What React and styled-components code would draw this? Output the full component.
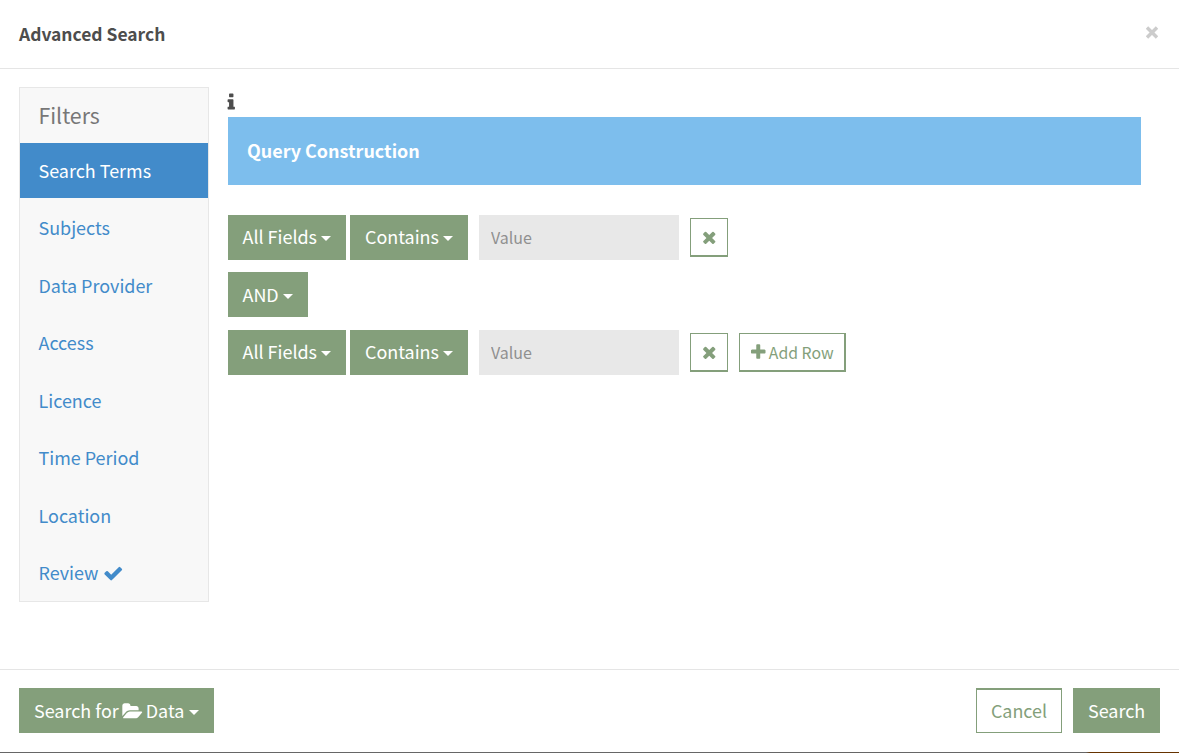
import React from 'react';
import styled, { createGlobalStyle } from 'styled-components';

const GREEN = '#849f7b';
const BLUE = '#428bca';

const GlobalStyle = createGlobalStyle`
  *, *::before, *::after { box-sizing: border-box; }
  body {
    margin: 0;
    background: #fff;
    color: #4d4d4d;
    font: 17.95px/22px "Noto Sans CJK SC", "Open Sans", sans-serif;
  }
  button, input { font: inherit; margin: 0; border-radius: 0; }
`;

const Modal = styled.div`
  height: 753px;
  display: flex;
  flex-direction: column;
  overflow: hidden;
`;

const Header = styled.header`
  flex: none;
  height: 69px;
  padding: 0 19px;
  display: flex;
  align-items: center;
  justify-content: space-between;
  border-bottom: 1px solid #e5e5e5;
`;

const Title = styled.h4`
  margin: 0;
  font-size: 17.45px;
  font-weight: 700;
`;

const Close = styled.button`
  padding: 0 2px 3px;
  display: flex;
  border: 0;
  background: none;
  color: #ccc;
`;

const Cross = styled.svg`
  width: 12px;
  height: 13px;
  fill: none;
  stroke: currentColor;
  stroke-width: 3.4;
`;

const Body = styled.main`
  flex: none;
  height: 600px;
  padding: 18px 38px 0 19px;
  display: flex;
  align-items: flex-start;
  gap: 19px;
`;

const Sidebar = styled.nav`
  flex: none;
  width: 190px;
  height: 515px;
  display: flex;
  flex-direction: column;
  background: #f8f8f8;
  border: 1px solid #e7e7e7;
`;

const Brand = styled.div`
  height: 55px;
  padding-left: 18.5px;
  color: #777;
  font-size: 21.3px;
  line-height: 53px;
`;

const Filters = styled.ul`
  margin: 0;
  padding: 0;
  list-style: none;
  display: grid;
  grid-auto-rows: 55px;
  row-gap: 2.5px;
`;

const Filter = styled.li`
  padding: 0 0 2px 18.5px;
  display: flex;
  align-items: center;
  gap: 5px;
  color: ${(p) => (p.$active ? '#fff' : BLUE)};
  background: ${(p) => (p.$active ? BLUE : 'transparent')};
`;

const Content = styled.section`
  flex: 1;
  display: flex;
  flex-direction: column;
`;

const Info = styled.div`
  height: 30px;
  padding-top: 4.5px;
  display: flex;
`;

const Banner = styled.div`
  height: 68px;
  margin-bottom: 30px;
  padding: 0 0 2px 19px;
  display: flex;
  align-items: center;
  color: #fff;
  background: #7dbeed;
  font-weight: 700;
`;

const Rows = styled.div`
  display: grid;
  grid-template-rows: 57px 58px 45px;
  align-items: start;
`;

const Row = styled.div`
  display: flex;
  align-items: center;
`;

const Solid = styled.button`
  width: ${(p) => p.$w}px;
  height: 45px;
  margin-right: ${(p) => p.$gap || 0}px;
  padding: 0 0 ${(p) => p.$lift || 2}px ${(p) => p.$inset || 14.5}px;
  display: flex;
  align-items: center;
  border: 0;
  color: #fff;
  background: ${GREEN};
  white-space: nowrap;
`;

const Caret = styled.span`
  margin: 5px 0 0 ${(p) => p.$gap || 4.5}px;
  border-top: 5px solid currentColor;
  border-left: 5px solid transparent;
  border-right: 5px solid transparent;
`;

const Value = styled.input`
  width: 200px;
  height: 45px;
  margin-right: 11px;
  padding: 0 12px 2px;
  border: 0;
  background: #e8e8e8;
  font-size: 16px;
  &::placeholder { color: #909090; opacity: 1; }
`;

const Outline = styled.button`
  width: ${(p) => p.$w}px;
  height: ${(p) => p.$h || 39}px;
  margin-right: 11px;
  padding: ${(p) => p.$pad || 0};
  display: flex;
  align-items: center;
  justify-content: center;
  gap: 1px;
  border: 1px solid ${GREEN};
  border-width: ${(p) => p.$edges || '1px 1px 2px'};
  color: ${GREEN};
  background: #fff;
  font-size: ${(p) => p.$size || 15.8}px;
  white-space: nowrap;
`;

const Footer = styled.footer`
  flex: none;
  height: 83px;
  padding: 18px 19px 0;
  display: flex;
  border-top: 1px solid #e5e5e5;
`;

const Actions = styled.div`
  margin-left: auto;
  display: flex;
`;

const BottomEdge = styled.div`
  flex: none;
  height: 1px;
  background: linear-gradient(90deg, #666 0 1086px, #663300 1090px);
`;

const Glyph = styled.svg`
  flex: none;
  width: ${(p) => p.$size}px;
  height: ${(p) => p.$size}px;
  margin: ${(p) => p.$m || 0};
  fill: currentColor;
  overflow: visible;
`;

const PATHS = {
  check: 'M1671 566q0 40-28 68l-724 724-136 136q-28 28-68 28t-68-28l-136-136-362-362q-28-28-28-68t28-68l136-136q28-28 68-28t68 28l294 295 656-657q28-28 68-28t68 28l136 136q28 28 28 68z',
  times: 'M1490 1322q0 40-28 68l-136 136q-28 28-68 28t-68-28l-294-294-294 294q-28 28-68 28t-68-28l-136-136q-28-28-28-68t28-68l294-294-294-294q-28-28-28-68t28-68l136-136q28-28 68-28t68 28l294 294 294-294q28-28 68-28t68 28l136 136q28 28 28 68t-28 68l-294 294 294 294q28 28 28 68z',
  plus: 'M1600 736v192q0 40-28 68t-68 28h-416v416q0 40-28 68t-68 28h-192q-40 0-68-28t-28-68v-416h-416q-40 0-68-28t-28-68v-192q0-40 28-68t68-28h416v-416q0-40 28-68t68-28h192q40 0 68 28t28 68v416h416q40 0 68 28t28 68z',
  info: 'M1216 1344v128q0 26-19 45t-45 19h-512q-26 0-45-19t-19-45v-128q0-26 19-45t45-19h64v-384h-64q-26 0-45-19t-19-45v-128q0-26 19-45t45-19h384q26 0 45 19t19 45v576h64q26 0 45 19t19 45zm-128-1152v192q0 26-19 45t-45 19h-256q-26 0-45-19t-19-45v-192q0-26 19-45t45-19h256q26 0 45 19t19 45z',
  folder: 'M1815 952q0 31-31 66l-336 396q-43 51-120.5 86.5t-143.5 35.5h-1088q-34 0-60.5-13t-26.5-43q0-31 31-66l336-396q43-51 120.5-86.5t143.5-35.5h1088q34 0 60.5 13t26.5 43zm-343-344v160h-832q-94 0-197 47.5t-164 119.5l-337 396-5 6q0-4-.5-12.5t-.5-12.5v-960q0-92 66-158t158-66h320q92 0 158 66t66 158v32h544q92 0 158 66t66 158z',
};

const Icon = ({ name, size, m }) => (
  <Glyph viewBox="0 0 1792 1792" $size={size} $m={m} aria-hidden="true">
    <path d={PATHS[name]} />
  </Glyph>
);

const FILTERS = ['Search Terms', 'Subjects', 'Data Provider', 'Access', 'Licence', 'Time Period', 'Location', 'Review'];

const Condition = ({ children }) => (
  <Row>
    <Solid $w={118} $gap={4} $lift={3}>All Fields<Caret $gap={4} /></Solid>
    <Solid $w={118} $gap={11} $inset={15} $lift={3}>Contains<Caret /></Solid>
    <Value placeholder="Value" />
    <Outline $w={38} aria-label="Remove row"><Icon name="times" size={18.5} m="1px 0 0 1px" /></Outline>
    {children}
  </Row>
);

export default function App() {
  return (
    <Modal>
      <GlobalStyle />
      <Header>
        <Title>Advanced Search</Title>
        <Close aria-label="Close">
          <Cross viewBox="0 0 12 13"><path d="M1 1.5 11 11.5M11 1.5 1 11.5" /></Cross>
        </Close>
      </Header>
      <Body>
        <Sidebar>
          <Brand>Filters</Brand>
          <Filters>
            {FILTERS.map((label, i) => (
              <Filter key={label} $active={i === 0}>
                {label}
                {label === 'Review' && <Icon name="check" size={20.5} m="2px 0 0 0" />}
              </Filter>
            ))}
          </Filters>
        </Sidebar>
        <Content>
          <Info><Icon name="info" size={20.5} m="0 0 0 -7px" /></Info>
          <Banner>Query Construction</Banner>
          <Rows>
            <Condition />
            <Row><Solid $w={80}>AND<Caret $gap={4} /></Solid></Row>
            <Condition>
              <Outline $w={107} $edges="1px 2px 2px 1px" $pad="1px 1px 0 0">
                <Icon name="plus" size={18.5} />Add Row
              </Outline>
            </Condition>
          </Rows>
        </Content>
      </Body>
      <Footer>
        <Solid $w={195} $inset={15}>
          Search for<Icon name="folder" size={19} m="3px 4px 0 4px" />Data<Caret />
        </Solid>
        <Actions>
          <Outline $w={86} $h={45} $edges="2px 1px 1px" $size={17.95} $pad="0 0 2px">Cancel</Outline>
          <Solid $w={87} $inset={15}>Search</Solid>
        </Actions>
      </Footer>
      <BottomEdge />
    </Modal>
  );
}
